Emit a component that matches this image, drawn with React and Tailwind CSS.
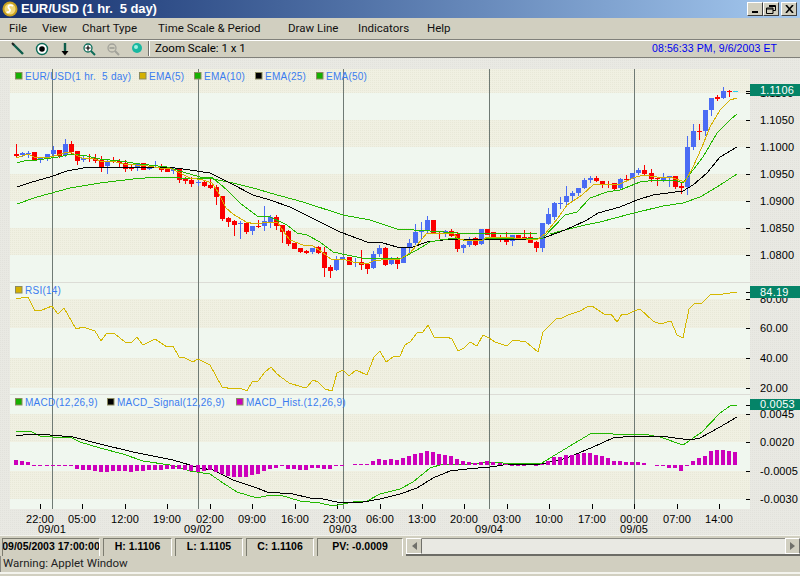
import React from 'react';

const C = [
  ['r',144,154,156,158],['b',152,153,155,157],['b',151,153,154,158],['r',152,152,160,160],['b',157,158,159,163],
  ['b',154,154,158,161],['b',146,150,154,157],['r',150,150,156,158],['b',139,144,155,157],['r',141,144,152,155],
  ['r',151,151,161,165],['b',156,158,160,162],['r',154,158,159,162],['r',154,158,161,163],['r',156,160,167,172],
  ['b',160,161,166,174],['r',157,160,162,163],['r',159,161,163,167],['r',160,163,169,172],['r',164,168,169,171],
  ['b',164,164,167,171],['r',163,163,170,170],['b',167,167,169,170],['b',161,165,166,168],['r',164,166,170,172],
  ['r',167,167,172,172],['b',168,169,171,174],['r',168,168,180,183],['r',177,179,181,184],['r',177,180,184,187],
  ['b',180,182,183,186],['r',181,182,186,187],['r',179,185,188,189],['r',185,187,197,205],['r',196,196,219,221],
  ['r',217,218,222,227],['r',220,221,225,236],['b',221,223,224,239],['r',222,223,232,234],['b',226,226,231,235],
  ['r',220,226,227,228],['b',206,221,226,231],['b',215,217,222,228],['r',215,217,226,230],['r',225,225,232,243],
  ['r',230,231,244,246],['r',243,243,249,249],['r',248,248,252,253],['r',250,251,253,254],['b',248,248,252,254],
  ['r',246,247,253,254],['r',247,252,268,277],['r',265,267,271,278],['b',256,260,270,271],['b',257,257,259,259],
  ['r',257,257,265,265],['b',258,262,263,267],['r',250,262,265,270],['r',263,264,269,274],['b',251,254,268,269],
  ['b',245,248,254,257],['r',247,248,265,266],['b',257,259,264,265],['r',257,260,264,269],['b',247,247,263,263],
  ['b',239,243,247,253],['b',224,232,243,245],['b',222,231,232,239],['b',216,220,231,233],['r',220,220,233,233],
  ['r',231,233,234,239],['b',230,231,233,237],['r',229,231,236,237],['r',232,234,249,252],['b',244,245,248,253],
  ['b',237,239,245,247],['r',237,238,245,246],['b',229,229,244,245],['r',229,229,235,235],['r',232,232,237,237],
  ['r',235,238,239,242],['r',232,239,242,245],['b',235,235,241,246],['r',235,235,238,238],['r',230,237,238,240],
  ['r',232,237,243,243],['r',241,242,248,252],['b',223,223,248,252],['b',208,214,224,225],['b',202,203,217,220],
  ['b',197,203,204,209],['b',186,196,202,207],['b',191,193,196,202],['b',188,188,193,196],['b',178,180,188,189],
  ['b',176,178,180,183],['r',176,178,181,182],['r',181,181,185,188],['r',181,184,185,188],['r',183,183,189,190],
  ['b',178,179,188,189],['r',175,179,180,182],['b',173,173,179,179],['b',168,170,173,175],['r',165,170,174,175],
  ['r',169,173,179,182],['r',177,178,179,186],['b',173,178,180,182],['b',176,176,178,187],['r',176,176,187,189],
  ['r',183,186,188,194],['b',136,147,187,195],['b',124,131,147,150],['r',124,131,132,140],['b',110,110,131,136],
  ['b',98,98,110,116],['r',95,97,99,101],['b',87,91,98,99],['r',90,91,92,97],['c',91,91,92,92],
];

const E5 = '16,158 22,156 28,154 34,157 46,158 58,155 64,153 70,152 76,155 82,158 94,159 100,161 112,161 124,164 136,165 148,166 160,168 172,169 178,172 190,178 203,180 212,183 218,192 226,208 233,214 246,222 255,224 270,222 278,223 283,231 290,240 303,245 313,246 322,252 332,260 343,259 353,262 367,264 373,261 390,259 400,259 410,253 417,245 427,233 443,233 453,233 458,239 470,241 483,240 487,237 503,237 537,240 545,234 558,218 567,205 582,195 593,185 607,184 620,184 633,178 643,175 657,177 673,178 685,182 693,167 702,147 710,127 720,110 730,100 737,98';
const E10 = '17,163 27,160 37,160 58,157 72,154 87,156 100,159 120,161 140,164 167,167 183,172 200,177 213,178 227,190 240,203 257,216 270,217 287,225 297,233 307,235 320,242 333,252 347,255 367,259 383,258 400,259 417,250 430,242 440,240 457,238 463,240 483,240 487,238 510,238 537,238 543,238 565,215 577,212 590,198 607,192 620,190 640,182 657,180 677,181 683,183 693,170 703,157 717,133 730,120 737,114';
const E25 = '17,187 32,182 50,177 67,171 83,168 107,167 167,167 183,169 210,173 230,183 253,195 270,200 290,207 320,222 340,232 367,242 383,243 397,247 413,247 427,242 443,240 483,239 537,239 543,238 560,232 572,227 587,220 598,213 620,207 637,200 653,195 683,191 693,185 707,173 720,157 737,147';
const E50 = '17,204 37,197 70,188 100,183 133,179 157,177 180,178 213,179 233,183 257,189 270,193 303,202 343,215 370,220 397,229 430,231 457,233 470,233 537,234 550,234 565,230 585,225 600,222 630,214 663,206 683,203 700,197 717,187 737,174';
const RSI = '16,299 21,298 28,297 35,311 42,310 52,306 58,314 64,308 76,329 83,327 95,331 101,341 107,333 115,334 125,342 131,343 137,337 143,345 155,339 167,347 173,346 179,357 185,358 193,362 198,359 210,365 222,387 233,389 240,388 247,391 252,382 258,381 265,372 271,367 277,374 289,383 302,387 307,387 313,380 318,382 325,389 332,391 337,373 343,370 349,376 356,370 367,375 374,357 380,351 386,362 393,357 400,356 405,345 410,342 417,333 423,332 428,325 434,337 440,338 447,337 452,339 458,351 464,348 470,342 477,346 483,335 489,338 495,342 507,346 513,340 526,342 538,352 543,332 556,319 562,318 568,315 580,311 587,307 592,306 604,314 611,314 617,322 622,314 628,314 634,311 640,309 653,321 660,324 671,321 677,335 683,338 689,309 695,303 702,303 711,294 723,294 737,292';
const MACD = '16,431 30,431 40,436 53,437 60,438 70,437 80,442 100,448 123,454 143,461 170,465 190,471 210,474 223,483 237,492 257,498 270,495 280,495 300,501 320,503 333,506 353,502 367,501 380,494 400,489 413,482 430,468 443,464 460,465 489,462 503,463 528,463 542,463 550,458 570,446 590,434 597,433 613,434 643,434 660,437 683,445 702,432 720,413 730,406 737,405';
const SIGNAL = '16,436 30,434 50,435 73,437 100,444 133,452 173,460 200,468 213,470 233,480 257,488 267,492 293,494 310,498 323,499 337,502 363,502 380,499 400,494 417,488 433,478 450,471 467,469 490,467 510,464 542,464 567,458 593,447 613,438 633,436 660,436 690,440 700,438 720,427 737,417';
const HIST = [5,4,3,-1,-1,-1,-1,-1,-1,-1,-4,-5,-5,-6,-7,-7,-6,-6,-6,-7,-6,-6,-5,-5,-5,-4,-4,-4,-5,-6,-7,-6,-5,-7,-9,-11,-12,-12,-12,-10,-9,-6,-4,-3,-1,-4,-4,-5,-5,-3,-3,-4,-4,-1,-1,0,1,1,1,4,6,5,6,5,7,9,11,12,14,13,11,10,9,6,4,3,2,3,4,3,2,1,-1,-1,-1,0,-1,1,4,8,8,10,10,11,12,12,10,9,7,4,4,3,3,3,2,0,-1,-1,-3,-3,-6,-1,4,7,9,14,15,15,14,13];

const barX = (i) => Math.round(16.3 + 6.04 * i);

const lightBands = [[93, 27], [147, 27], [201, 27], [255, 27], [283, 16], [328, 30], [388, 6], [395, 19], [442, 29], [499, 10]];
const darkBands = [[69, 24], [120, 27], [174, 27], [228, 27], [299, 29], [358, 30], [414, 28], [471, 28]];
const verticals = [52, 198, 343, 489, 634];
const ticks = [[40,'22:00'],[82,'05:00'],[125,'12:00'],[167,'19:00'],[210,'02:00'],[252,'09:00'],[295,'16:00'],[337,'23:00'],[380,'06:00'],[422,'13:00'],[464,'20:00'],[507,'03:00'],[549,'10:00'],[592,'17:00'],[634,'00:00'],[677,'07:00'],[719,'14:00']];
const dates = [[52,'09/01'],[198,'09/02'],[343,'09/03'],[489,'09/04'],[634,'09/05']];
const yLabels = [[120,'1.1050'],[147,'1.1000'],[174,'1.0950'],[201,'1.0900'],[228,'1.0850'],[255,'1.0800'],[299,'80.00'],[328,'60.00'],[358,'40.00'],[388,'20.00'],[414,'0.0045'],[442,'0.0020'],[471,'-0.0005'],[499,'-0.0030']];

const Legend = ({ x, y, color, children }) => (
  <g>
    <rect x={x + 0.5} y={y - 3.5} width="6.5" height="6.5" fill={color} stroke="#8a8a60" strokeWidth="1" />
    <text x={x + 10} y={y + 4} fontSize="10" fill="#3a7cf0" letterSpacing="0.25" xmlSpace="preserve">{children}</text>
  </g>
);

const Flag = ({ y, h, children }) => (
  <g>
    <rect x="750" y={y} width="50" height={h} fill="#058468" />
    <text x="760" y={y + h - 2} fontSize="11" fill="#ffffff" letterSpacing="0.2">{children}</text>
  </g>
);

const Chart = () => (
  <svg className="block" width="800" height="477" viewBox="0 58 800 477">
    <defs>
      <pattern id="dotBeige" width="2" height="2" patternUnits="userSpaceOnUse">
        <rect width="2" height="2" fill="#f0f0e2" />
        <rect width="1" height="1" fill="#e8e8d8" />
      </pattern>
      <pattern id="dotGray" width="2" height="2" patternUnits="userSpaceOnUse">
        <rect width="2" height="2" fill="#e9e9e3" />
        <rect width="1" height="1" fill="#e2e2dc" />
      </pattern>
    </defs>
    <rect x="0" y="58" width="800" height="477" fill="url(#dotGray)" />
    {lightBands.map(([y, h]) => <rect key={y} x="10" y={y} width="740" height={h} fill="#f0f7ef" />)}
    {darkBands.map(([y, h]) => <rect key={y} x="10" y={y} width="740" height={h} fill="url(#dotBeige)" />)}
    <rect x="10" y="282" width="740" height="1" fill="#dcdcd6" />
    <rect x="10" y="394" width="740" height="1" fill="#dcdcd6" />

    <g shapeRendering="crispEdges">
      {verticals.map((x) => <rect key={x} x={x} y="69" width="1" height="440" fill="#6f7a74" />)}
      {ticks.map(([x]) => <rect key={x} x={x} y="504" width="1" height="5" fill="#000" />)}
      {[93, ...yLabels.map((l) => l[0]), 91, 292, 405].map((y) => <rect key={y} x="746" y={y} width="4" height="1" fill="#000" />)}

      {C.map(([c, wt, bt, bb, wb], i) => {
        const fill = c === 'r' ? '#fb0000' : c === 'b' ? '#4a6cf4' : '#22d3ee';
        const x = barX(i);
        return (
          <g key={i} fill={fill}>
            <rect x={x} y={wt} width="1" height={wb - wt} />
            <rect x={x - 2} y={bt} width="5" height={Math.max(bb - bt, 1)} />
          </g>
        );
      })}

      <g fill="none" strokeWidth="1">
        <polyline points={E50} stroke="#22b800" />
        <polyline points={E25} stroke="#000000" />
        <polyline points={E10} stroke="#22b800" />
        <polyline points={E5} stroke="#d4b000" />
        <polyline points={RSI} stroke="#d4b800" />
        <polyline points={MACD} stroke="#22b800" />
        <polyline points={SIGNAL} stroke="#000000" />
      </g>

      {HIST.map((v, i) =>
        v === 0 ? null : (
          <rect key={i} x={barX(i) - 2} y={v > 0 ? 465 - v : 465} width="4" height={Math.abs(v)} fill="#cc00bb" />
        )
      )}
    </g>

    <Legend x={15} y={76} color="#16b000">EUR/USD(1 hr.  5 day)</Legend>
    <Legend x={139} y={76} color="#d4b000">EMA(5)</Legend>
    <Legend x={194} y={76} color="#16b000">EMA(10)</Legend>
    <Legend x={255} y={76} color="#000000">EMA(25)</Legend>
    <Legend x={316} y={76} color="#16b000">EMA(50)</Legend>
    <Legend x={15} y={290} color="#d4b000">RSI(14)</Legend>
    <Legend x={15} y={402} color="#16b000">MACD(12,26,9)</Legend>
    <Legend x={107} y={402} color="#000000">MACD_Signal(12,26,9)</Legend>
    <Legend x={236} y={402} color="#cc00bb">MACD_Hist.(12,26,9)</Legend>

    <g fontSize="11" fill="#000" letterSpacing="0.1">
      {yLabels.map(([y, t]) => <text key={t} x="760" y={y + 4}>{t}</text>)}
      <text x="760" y="97">1.1100</text>
      {ticks.map(([x, t]) => <text key={x} x={x} y="523" textAnchor="middle">{t}</text>)}
      {dates.map(([x, t]) => <text key={x} x={x} y="533" textAnchor="middle">{t}</text>)}
    </g>

    <Flag y={84} h={12}>1.1106</Flag>
    <Flag y={286} h={12}>84.19</Flag>
    <Flag y={399} h={11}>0.0053</Flag>
  </svg>
);

const WinBtn = ({ children }) => (
  <span className="flex h-[14px] w-[16px] items-center justify-center bg-[#d1cfc0] border border-t-white border-l-white border-r-[#404040] border-b-[#404040]">
    {children}
  </span>
);

const Cell = ({ className, children }) => (
  <div className={`flex h-[18px] items-center justify-center overflow-hidden whitespace-nowrap border-t border-l border-[#7c7c70] border-r border-b-0 border-r-white text-[10.5px] font-bold ${className}`}>
    {children}
  </div>
);

export default function App() {
  return (
    <div className="flex h-[576px] w-[800px] flex-col overflow-hidden bg-[#d1cfc0] font-['Liberation_Sans',sans-serif] text-black">
      {/* title bar */}
      <div className="flex h-[18px] shrink-0 items-center bg-gradient-to-r from-[#16306e] to-[#a6caf0] pl-[2px] pr-[3px]">
        <svg width="16" height="16" viewBox="0 0 16 16">
          <circle cx="8" cy="8" r="7.5" fill="#c8a020" />
          <circle cx="8" cy="8" r="5.5" fill="#f2d878" />
          <path d="M11 5 C8 3 5 5 7 7.5 C9 9 8 12 4.5 11" fill="none" stroke="#fff" strokeWidth="1.8" />
        </svg>
        <span className="ml-[3px] whitespace-pre text-[13px] font-bold tracking-[-0.1px] text-white">EUR/USD (1 hr.  5 day)</span>
        <div className="ml-auto flex items-center">
          <WinBtn><span className="mt-[6px] h-[2px] w-[6px] bg-black" /></WinBtn>
          <WinBtn>
            <svg width="10" height="9" viewBox="0 0 10 9" fill="none" stroke="#000"><path d="M3 .5h6.5v5H7M.5 3h6.5v5.5H.5z M3 1.5h6.5M.5 4h6.5" /></svg>
          </WinBtn>
          <span className="w-[2px]" />
          <WinBtn>
            <svg width="9" height="8" viewBox="0 0 9 8" stroke="#000" strokeWidth="1.6"><path d="M1 0l7 8M8 0L1 8" /></svg>
          </WinBtn>
        </div>
      </div>

      {/* menu */}
      <div className="flex h-[21px] shrink-0 items-center pl-[9px] font-['Roboto',sans-serif] text-[11.5px] text-[#111]">
        <span className="w-[33px]">File</span>
        <span className="w-[40px]">View</span>
        <span className="w-[76px]">Chart Type</span>
        <span className="w-[130px]">Time Scale &amp; Period</span>
        <span className="w-[70px]">Draw Line</span>
        <span className="w-[69px]">Indicators</span>
        <span>Help</span>
      </div>

      {/* toolbar */}
      <div className="flex h-[19px] shrink-0 items-center border-t border-t-[#80807a] border-b border-b-[#80807a] shadow-[inset_0_1px_0_#ffffff] pl-[10px]">
        <svg width="14" height="14" viewBox="0 0 14 14" className="ml-[1px]"><path d="M2 2l10 10" stroke="#0d5c4a" strokeWidth="2.4" /><path d="M1 1l2 2" stroke="#222" strokeWidth="2" /></svg>
        <svg width="14" height="14" viewBox="0 0 14 14" className="ml-[10px]"><circle cx="7" cy="7" r="5.5" fill="#fff" stroke="#0d6c58" strokeWidth="1.4" /><circle cx="7" cy="7" r="2.8" fill="#000" /></svg>
        <svg width="12" height="14" viewBox="0 0 12 14" className="ml-[10px]"><path d="M6 1v9" stroke="#0d5c4a" strokeWidth="2.4" /><path d="M2.5 9h7L6 13.5z" fill="#000" /></svg>
        <svg width="14" height="14" viewBox="0 0 14 14" className="ml-[11px]"><circle cx="6" cy="6" r="4" fill="#fff" stroke="#0d6c58" strokeWidth="1.3" /><path d="M3.5 6h5M6 3.5v5" stroke="#000" strokeWidth="1.2" /><path d="M9 9l4 4" stroke="#0d6c58" strokeWidth="2" /></svg>
        <svg width="14" height="14" viewBox="0 0 14 14" className="ml-[10px]"><circle cx="6" cy="6" r="4" fill="none" stroke="#a2a29a" strokeWidth="1.3" /><path d="M3.5 6h5" stroke="#8a8a84" strokeWidth="1.2" /><path d="M9 9l4 4" stroke="#a2a29a" strokeWidth="2" /></svg>
        <svg width="14" height="14" viewBox="0 0 14 14" className="ml-[10px]"><circle cx="7" cy="6" r="5" fill="#18b8a0" /><circle cx="6" cy="5" r="2" fill="#a0f0e0" /></svg>
        <span className="ml-[4px] h-[15px] w-[2px] border-l border-l-[#70706a] border-r border-r-white" />
        <span className="ml-[5px] font-['Roboto',sans-serif] text-[11.5px]">Zoom Scale: 1 x 1</span>
        <span className="ml-auto mr-[23px] text-[10.5px] tracking-[0.1px] text-[#0000f0]">08:56:33 PM, 9/6/2003 ET</span>
      </div>

      <Chart />

      {/* status row */}
      <div className="flex h-[21px] shrink-0 items-center gap-[3px] border-t border-t-[#f4f4ee] pl-[2px] pt-[1px]">
        <Cell className="w-[98px]">09/05/2003 17:00:00</Cell>
        <Cell className="w-[69px]">H: 1.1106</Cell>
        <Cell className="w-[68px]">L: 1.1105</Cell>
        <Cell className="w-[68px]">C: 1.1106</Cell>
        <Cell className="w-[86px]">PV: -0.0009</Cell>
        <div className="flex h-[18px] flex-1 items-center bg-[#e9e9e3] border-b-2 border-b-[#6c6c66] border-t border-t-[#8a8a84]">
          <span className="flex h-[16px] w-[16px] items-center justify-center bg-[#d1cfc0] border border-white border-r-[#70706a]">
            <span className="h-0 w-0 border-y-[4px] border-y-transparent border-r-[5px] border-r-[#70706a]" />
          </span>
          <span className="flex-1" />
          <span className="flex h-[16px] w-[15px] items-center justify-center bg-[#d1cfc0] border border-white border-r-[#70706a]">
            <span className="h-0 w-0 border-y-[4px] border-y-transparent border-l-[5px] border-l-[#70706a]" />
          </span>
        </div>
      </div>

      {/* applet warning */}
      <div className="flex h-[16px] shrink-0 items-center border-l border-l-[#8a8a84] pl-[2px] font-['Roboto',sans-serif] text-[11.5px] text-[#222]">
        Warning: Applet Window
      </div>
      <div className="h-[2px] shrink-0 bg-[#f4f4ee]" />
    </div>
  );
}
